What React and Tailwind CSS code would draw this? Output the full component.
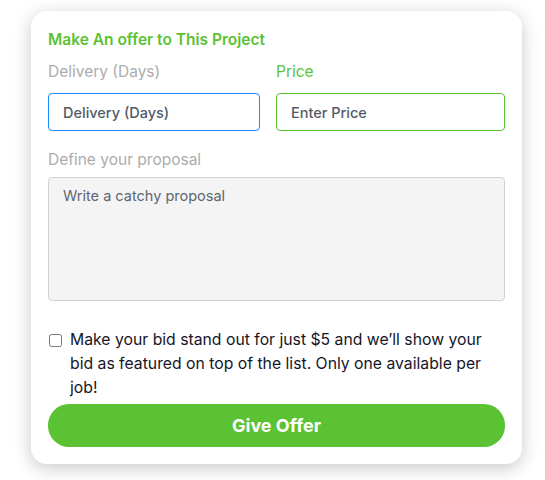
import React, { useState } from "react";

export default function App() {
  const [featured, setFeatured] = useState(false);

  return (
    <div className="min-h-[480px] bg-white pt-[11px] pl-[31px]" style={{ fontFamily: "Inter, 'Noto Sans', sans-serif" }}>
      {/* Offer card */}
      <div className="w-[491px] rounded-[16px] bg-white px-[17px] pt-[18px] pb-[17px] shadow-[0_4px_18px_rgba(0,0,0,0.22)]">
        <h2 className="text-[15.5px] leading-[22px] font-semibold text-[#5bc234]">Make An offer to This Project</h2>

        <div className="mt-[10px] grid grid-cols-[212px_1fr] gap-x-[16px]">
          <div>
            <label className="block text-[15.5px] leading-[22px] text-[#acacac]">Delivery (Days)</label>
            <input
              placeholder="Delivery (Days)"
              className="mt-[10px] h-[38px] w-full rounded-[4px] border border-[#1a8cff] px-[14px] text-[14.5px] font-medium text-[#333] outline-none placeholder:text-[#525b68]"
            />
          </div>
          <div>
            <label className="block text-[15.5px] leading-[22px] text-[#5bc234]">Price</label>
            <input
              placeholder="Enter Price"
              className="mt-[10px] h-[38px] w-full rounded-[4px] border border-[#5bc234] px-[14px] text-[14.5px] font-medium text-[#333] outline-none placeholder:text-[#525b68]"
            />
          </div>
        </div>

        <label className="mt-[18px] block text-[15.5px] leading-[22px] text-[#acacac]">Define your proposal</label>
        <textarea
          placeholder="Write a catchy proposal"
          className="mt-[6px] block h-[124px] w-full resize-none rounded-[4px] border border-[#d2d2d2] bg-[#f4f4f4] px-[14px] py-[8px] text-[14.5px] leading-[20px] text-[#333] outline-none placeholder:text-[#5f6670]"
        />

        <label className="mt-[27px] flex items-start gap-[8px] pr-[14px]">
          <input
            type="checkbox"
            checked={featured}
            onChange={() => setFeatured(!featured)}
            className="mt-[6px] ml-[1px] h-[13px] w-[13px] shrink-0"
          />
          <span className="text-[15.75px] leading-[24px] text-[#161628]">
            Make your bid stand out for just $5 and we’ll show your bid as featured on top of the list. Only one available per job!
          </span>
        </label>

        <button className="mt-[4px] h-[43px] w-full rounded-[21px] bg-[#5bc234] text-[18px] font-bold text-white">
          Give Offer
        </button>
      </div>
    </div>
  );
}
